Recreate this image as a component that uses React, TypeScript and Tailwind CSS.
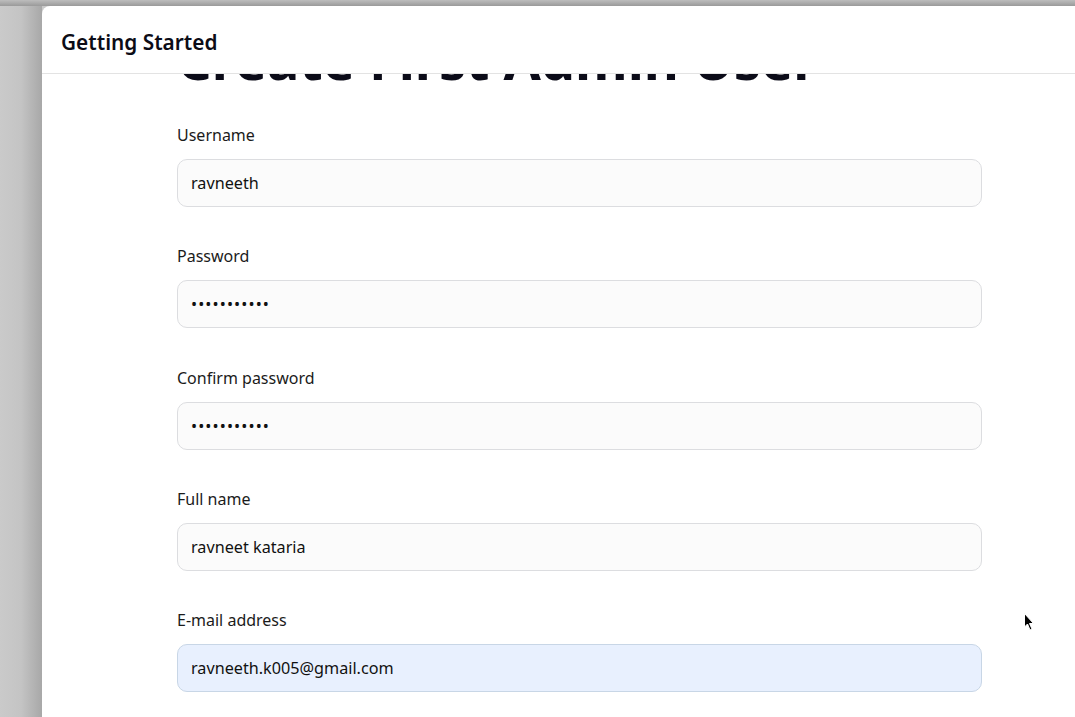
import React from "react";

const font = { fontFamily: '"Noto Sans", "Open Sans", Arial, sans-serif' };

function Field({ label, value, type = "text", autofill = false }: { label: string; value: string; type?: string; autofill?: boolean }) {
  return (
    <div className="mb-[37.25px]">
      <div className="text-[16px] leading-[24px] text-[#1b1b1b] mb-[12px]">{label}</div>
      <input
        readOnly
        type={type}
        value={value}
        style={font}
        className={
          "block w-[805px] h-[48px] rounded-[10px] border px-[13px] text-[16.2px] text-[#111] outline-none " +
          (type === "password" ? "tracking-[1.1px] " : "") +
          (autofill ? "bg-[#e8f0fe] border-[#c8d6e6]" : "bg-[#fbfbfb] border-[#dcdde0]")
        }
      />
    </div>
  );
}

export default function App() {
  return (
    <div style={font} className="relative h-[717px] w-full overflow-hidden bg-[#c9c9c9]">
      <div className="h-[6px] w-full bg-gradient-to-b from-[#bdbdbd] to-[#9a9a9a]" />
      <div className="flex h-[711px]">
        <div className="w-[42px] bg-gradient-to-r from-[#cacaca] via-[#c4c4c4] to-[#a8a8a8]" />
        <div className="flex flex-1 flex-col overflow-hidden rounded-tl-[8px] bg-white">
          <div className="h-[68px] shrink-0 border-b border-[#e3e3e3] pl-[19px] pt-[22px]">
            <div className="text-[20.8px] font-semibold leading-[28px] text-[#0c0c16]">Getting Started</div>
          </div>
          <div className="flex-1 overflow-hidden">
            <div className="ml-[135px] -mt-[45px]">
              <h1 className="text-[54px] font-bold leading-[60px] text-[#0b0b18] mb-[34px] whitespace-nowrap">Create First Admin User</h1>
              <Field label="Username" value="ravneeth" />
              <Field label="Password" value="ravneeth123" type="password" />
              <Field label="Confirm password" value="ravneeth123" type="password" />
              <Field label="Full name" value="ravneet kataria" />
              <Field label="E-mail address" value="ravneeth.k005@gmail.com" autofill />
            </div>
          </div>
        </div>
      </div>
      <svg className="absolute left-[1024px] top-[613px]" width="12" height="19" viewBox="0 0 12 19">
        <path d="M0.5 0.5 L0.5 14 L3.5 11 L6 17 L8 16 L5.5 10.5 L9.5 10.5 Z" fill="#000" stroke="#fff" strokeWidth="1" />
      </svg>
    </div>
  );
}
